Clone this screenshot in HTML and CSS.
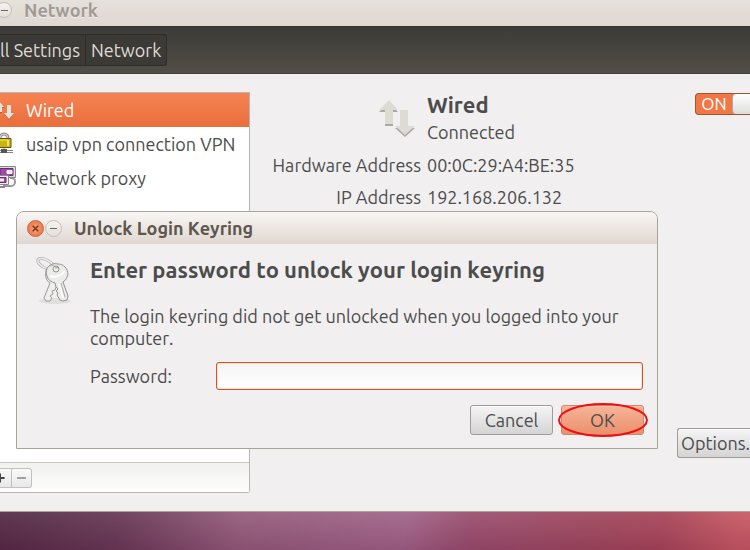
FILE: index.html
```html
<!DOCTYPE html>
<html lang="en">
<head>
<meta charset="utf-8">
<title>Network</title>
<link rel="stylesheet" href="styles.css">
</head>
<body>
<main class="window">
  <header class="titlebar">
    <button class="round" aria-label="Minimize window"></button>
    <h1>Network</h1>
  </header>
  <nav class="toolbar">
    <a class="crumb crumb-all" href="#all"><span>All Settings</span></a>
    <a class="crumb" href="#network">Network</a>
  </nav>
  <div class="content">
    <aside class="sidebar">
      <ul class="connections">
        <li class="selected"><svg class="row-icon" viewBox="0 0 16 24" aria-hidden="true">
          <path fill="#b5623c" d="M-6 10 -1 4l5 6H2v5h-5v-5z M4 16h3V8h4v8h3l-5 6z"/>
          <path fill="#e5e2da" d="M-6 9 -1 3l5 6H2v5h-5V9z M4 15h3V7h4v8h3l-5 6z"/>
        </svg>Wired</li>
        <li><svg class="row-icon" viewBox="0 0 16 24" aria-hidden="true">
          <path d="M0 10V6a4 4 0 0 1 8 0v4" fill="none" stroke="#888" stroke-width="3"/>
          <path d="M0 10V6a4 4 0 0 1 8 0v4" fill="none" stroke="#ddd"/>
          <path d="M-4 6.500h15v9H-4z" fill="#c9b414" stroke="#5e5612"/>
          <path d="M-3 8h11" stroke="#f3e96a"/><path d="M8 8v6" stroke="#f0e35a" stroke-width="2"/>
          <path d="M4 16v3M-2 18.500h15M-2 20.500h15" stroke="#888"/><path d="M1 17h6v4H1z" fill="#555"/>
        </svg>usaip vpn connection VPN</li>
        <li><svg class="row-icon" viewBox="0 0 16 24" aria-hidden="true">
          <path d="M10 12c7-1 6 8 1 8H3" fill="none" stroke="#999" stroke-width="2"/>
          <path d="M-2 .5h17.500v11H-2z" fill="#ddd" stroke="#888"/>
          <path d="M0 2.500h13v7H0z" fill="#9a4aa2" stroke="#6b2c74"/><path d="M7 4.500h5v3H7z" fill="#f0e0f0" stroke="#fff"/>
          <path d="M-4 9.500H8.500v9H-4z" fill="#eee" stroke="#888"/>
          <path d="M-3 11.500h9v5h-9z" fill="#9a4aa2" stroke="#6b2c74"/><path d="M0 12.500h4v3H0z" fill="#eee"/>
          <path d="M0 21h5" stroke="#888" stroke-width="2"/>
        </svg>Network proxy</li>
      </ul>
      <div class="list-tools">
        <button class="add" aria-label="Add connection"><svg viewBox="0 0 12 20" aria-hidden="true"><path d="M-4 10H5M0 5v10" stroke="#444" stroke-width="2"/></svg></button>
        <button class="remove" aria-label="Remove connection"><svg viewBox="0 0 20 20" aria-hidden="true"><path d="M5 10h10" stroke="#999" stroke-width="2"/></svg></button>
      </div>
    </aside>
    <section class="details">
      <div class="info">
        <svg class="wired-icon" viewBox="0 0 36 37" aria-hidden="true">
          <path fill="#aaa9a3" d="M0 12 10 2l9 10h-5v14H6V12z M16 28h5V12h8v16h7L26 37z"/>
          <path fill="#dedcd2" d="M0 10 10 0l9 10h-5v14H6V10z M16 26h5V10h8v16h7L26 35z"/>
        </svg>
        <div class="status"><h2>Wired</h2><p>Connected</p></div>
        <span class="term">Hardware Address</span><span>00:0C:29:A4:BE:35</span>
        <span class="term">IP Address</span><span>192.168.206.132</span>
      </div>
      <div class="side">
        <button class="switch" role="switch" aria-checked="true" aria-label="Wired connection"><span>ON</span><i></i></button>
        <button class="button options">Options...</button>
      </div>
    </section>
  </div>
</main>
<section class="dialog" role="dialog" aria-labelledby="dialog-title">
  <header class="titlebar dialog-bar">
    <span class="controls">
      <button class="round close" aria-label="Close dialog"><svg viewBox="0 0 16 16" aria-hidden="true"><path d="m5 5 6 6M11 5l-6 6" stroke="#71351f" stroke-width="1.500"/></svg></button>
      <button class="round" aria-label="Minimize dialog"></button>
    </span>
    <h2 id="dialog-title">Unlock Login Keyring</h2>
  </header>
  <form class="dialog-body">
    <svg class="keys" viewBox="0 0 36 48" aria-hidden="true">
      <ellipse cx="19" cy="44" rx="16" ry="3" fill="#e0dfde"/>
      <g fill="none"><ellipse cx="10" cy="7" rx="9" ry="4" transform="rotate(28 10 7)" stroke="#b0b0b0" stroke-width="3"/><ellipse cx="10" cy="7" rx="9" ry="4" transform="rotate(28 10 7)" stroke="#eee" stroke-width="1.500"/></g>
      <path d="M12 10c-4 5-3 13 2 16L8 41l2 3h4l2-3-2-2 3-2-1-3 3-1 4-11 1-10-7-4z" fill="#efefee" stroke="#999"/>
      <path fill-rule="evenodd" d="M22 7C14 5 8 12 11 19c1 4 4 6 8 7l1 4 2 2-2 2 2 2-1 2 3 5 3 1 4-1 1-4-5-14c6-4 6-11 2-15-2-2-4-3-7-3zm-2 2a3 3 0 1 1 0 6 3 3 0 0 1 0-6z" fill="#ececeb" stroke="#939393"/>
      <path d="M14 19c4 2 11 0 15-5M23 27l4 14" fill="none" stroke="#fff" stroke-width="2"/>
      <path d="m25 26 4 14M14 9c4-1 6 0 6 3" fill="none" stroke="#aaa"/>
    </svg>
    <div class="fields">
      <h3>Enter password to unlock your login keyring</h3>
      <p>The login keyring did not get unlocked when you logged into your computer.</p>
      <div class="password-row">
        <label for="password">Password:</label>
        <input id="password" type="password">
      </div>
      <div class="actions">
        <button class="button" type="button">Cancel</button>
        <span class="marked"><button class="button ok" type="button">OK</button><svg class="ring" viewBox="0 0 90 34" aria-hidden="true"><ellipse cx="45" cy="17" rx="44" ry="16" fill="none" stroke="#f20d12" stroke-width="2"/></svg></span>
      </div>
    </div>
  </form>
</section>
</body>
</html>
```
FILE: styles.css
```css
* { box-sizing: border-box; }
body {
  margin: 0;
  min-height: 100vh;
  display: flex;
  flex-direction: column;
  padding-bottom: 38px;
  position: relative;
  overflow: hidden;
  color: #4c4c4c;
  font: 18px/22px Ubuntu, "Noto Sans", sans-serif;
  font-kerning: none;
  background:
    linear-gradient(rgba(255, 255, 255, 0.06), rgba(60, 0, 40, 0.14)) bottom / 100% 38px no-repeat,
    linear-gradient(100deg, #542b45 0%, #683a56 16%, #955d7c 32%, #a2658a 54%, #9b5070 62%, #a0495f 78%, #a8475a 88%, #c95a64 98%) bottom / 100% 38px no-repeat;
}
h1, h2, h3, p, ul { margin: 0; padding: 0; }
button, input { font: inherit; font-kerning: inherit; color: inherit; padding: 0; margin: 0; }
.window {
  flex: 1;
  display: flex;
  flex-direction: column;
  background: #f1efef;
  border-bottom: 1px solid #aaa39c;
}
.titlebar {
  display: flex;
  align-items: center;
  height: 26px;
  gap: 12px;
  padding-bottom: 6px;
  background: linear-gradient(#e5e1db, #e0d7d0);
}
.titlebar h1, .titlebar h2 { font-size: 18px; line-height: 22px; }
.titlebar h1 { color: #a09b94; text-shadow: 0 1px #f4f0ec; }
.window > .titlebar .round { margin-left: -4px; }
.round {
  width: 16px;
  height: 16px;
  border: 1px solid #c4bfb9;
  border-radius: 50%;
  background: linear-gradient(#6b6661, #6b6661) center / 7px 1px no-repeat, linear-gradient(#f5f3f1, #e2dfdb);
}
.toolbar {
  height: 48px;
  display: flex;
  align-items: center;
  border-top: 1px solid #363530;
  border-bottom: 1px solid #403f39;
  background: linear-gradient(#3c3b37, #514e46);
}
.crumb {
  height: 32px;
  padding: 0 5px;
  color: #dfdbd2;
  line-height: 31px;
  text-decoration: none;
  background: #3b3a36;
  border: 1px solid #2e2d29;
  border-left: 0;
  border-radius: 0 3px 3px 0;
}
.crumb-all { width: 86px; overflow: hidden; display: flex; justify-content: flex-end; border-radius: 0; }
.crumb-all span { flex: none; }
.content { flex: 1; display: flex; padding: 18px 0; }
.sidebar {
  width: 33.333%;
  display: flex;
  flex-direction: column;
  background: #fff;
  border: 1px solid #b9b6b4;
  border-left: 0;
  border-radius: 0 0 3px 0;
}
.connections { flex: 1; list-style: none; }
.connections li {
  height: 34px;
  display: flex;
  align-items: center;
  gap: 10px;
  white-space: nowrap;
}
.connections .selected { color: #fff; background: linear-gradient(#f68253, #e96f3c); }
.row-icon { width: 16px; height: 24px; flex: none; }
.list-tools {
  height: 30px;
  display: flex;
  align-items: center;
  border-top: 1px solid #c9c7c4;
  background: linear-gradient(#f1f1ef, #fdfdfd);
}
.list-tools button {
  height: 20px;
  border: 1px solid #c2c0bd;
  border-left: 0;
  background: linear-gradient(#fafafa, #e8e8e8);
}
.list-tools svg { display: block; width: 100%; height: 100%; }
.list-tools .add { width: 12px; }
.list-tools .remove { width: 20px; border-radius: 0 3px 3px 0; }
.details { flex: 1; display: flex; justify-content: space-between; min-width: 0; }
.info {
  display: grid;
  grid-template-columns: 171px auto;
  grid-template-rows: 52px 22px 22px;
  gap: 10px 6px;
  align-content: start;
}
.wired-icon { width: 36px; height: 37px; justify-self: end; align-self: center; margin-right: 6px; }
.status h2 { font-size: 22px; line-height: 26px; }
.status p { line-height: 28px; }
.term { text-align: right; white-space: nowrap; }
.side { width: 73px; display: flex; flex-direction: column; justify-content: space-between; align-items: flex-end; padding: 1px 0 35px; }
.switch {
  width: 55px;
  height: 22px;
  display: flex;
  overflow: hidden;
  color: #fff;
  font-size: 17px;
  line-height: 20px;
  background: #f07746;
  border: 1px solid #a85434;
  border-right: 0;
  border-radius: 4px 0 0 4px;
}
.switch span { width: 36px; flex: none; text-align: center; }
.switch i { flex: 1; height: 20px; border-left: 1px solid #aaa; border-radius: 4px 0 0 4px; background: linear-gradient(#fff, #dedddc); }
.button {
  width: 83px;
  height: 30px;
  flex: none;
  border: 1px solid #9f9c99;
  border-radius: 3px;
  background: linear-gradient(#f5f5f5, #d4d4d4);
  box-shadow: inset 0 1px #fbfbfb;
}
.button.options { width: 73px; padding-left: 3px; text-align: left; overflow: hidden; border-right: 0; border-radius: 3px 0 0 3px; }
.dialog {
  position: absolute;
  top: 211px;
  left: 16px;
  right: 92px;
  background: #f1efef;
  border: 1px solid #a9a39c;
  border-radius: 8px 8px 0 0;
}
.dialog-bar { height: 32px; padding: 0 10px; border-radius: 7px 7px 0 0; background: linear-gradient(#f8f6f4, #e0d7d0); }
.controls { display: flex; gap: 1px; }
.controls .round { width: 17px; height: 17px; }
.round.close { border-color: #bd6848; background: radial-gradient(#f7a27a, #ea6a3b); }
.close svg { display: block; width: 15px; height: 15px; }
.dialog-bar h2 { color: #5d5750; }
.dialog-body { display: flex; gap: 18px; padding: 12px 13px 13px 19px; }
.keys { width: 36px; height: 48px; flex: none; margin-top: 1px; }
.fields { flex: 1; }
.fields h3 { font-size: 22px; line-height: 28px; white-space: nowrap; }
.fields p { margin-top: 21px; }
.password-row { display: flex; align-items: center; margin: 13px 1px 0 0; }
.password-row label { width: 126px; flex: none; }
.password-row input {
  flex: 1;
  min-width: 0;
  height: 28px;
  padding: 0 6px;
  border: 1px solid #d05426;
  border-radius: 3px;
  outline: 0;
  background: linear-gradient(#f4f4f4, #fff);
  box-shadow: inset 0 0 0 1px #fbe0d5;
}
.actions { display: flex; justify-content: flex-end; gap: 8px; margin-top: 15px; }
.marked { position: relative; display: flex; }
.button.ok { border-color: #c9886f; background: linear-gradient(#f7b498, #ea906d); box-shadow: inset 0 1px #f9c3ab; }
.ring { position: absolute; left: -3px; top: -2px; width: 90px; height: 34px; pointer-events: none; }
```
